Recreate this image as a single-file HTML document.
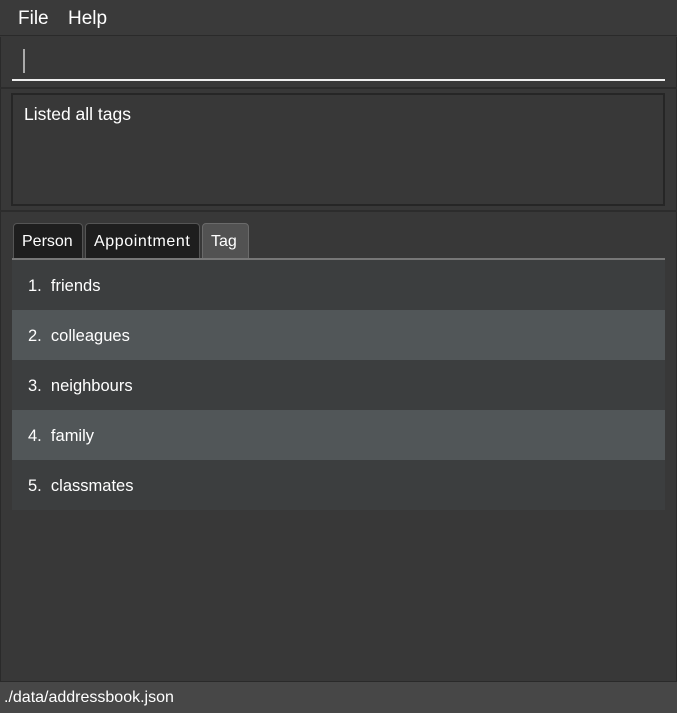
<!DOCTYPE html><html><head><style>
*{margin:0;padding:0;box-sizing:border-box}
body{width:677px;height:713px;background:#383838;font-family:"Liberation Sans",sans-serif;color:#fff;position:relative;overflow:hidden}
.a{position:absolute}
.r{font-size:16.5px;padding:17px 0 0 16px}
</style></head><body>
<div class="a" style="left:0;top:0;width:677px;height:36px;background:#3a3a3a;border-bottom:1px solid #2a2a2a"></div>
<div class="a" style="left:18px;top:8px;font-size:19px">File</div>
<div class="a" style="left:68px;top:8px;font-size:19px">Help</div>
<div class="a" style="left:0;top:37px;width:677px;height:644px;border-left:1px solid #2a2a2a;border-right:1px solid #2a2a2a"></div>
<div class="a" style="left:23px;top:49px;width:2px;height:24px;background:#aaa"></div>
<div class="a" style="left:12px;top:79px;width:653px;height:2px;background:#eee"></div>
<div class="a" style="left:0;top:87px;width:677px;height:2px;background:#2c2c2c"></div>
<div class="a" style="left:11px;top:93px;width:654px;height:113px;border:2px solid #262626;background:#383838"></div>
<div class="a" style="left:24px;top:104px;font-size:17.5px">Listed all tags</div>
<div class="a" style="left:0;top:210px;width:677px;height:2px;background:#2c2c2c"></div>
<div class="a" style="left:13px;top:223px;width:70px;height:36px;background:#1e1e1e;border:1px solid #555;border-radius:4px 4px 0 0;font-size:16px;padding:9px 0 0 8px">Person</div>
<div class="a" style="left:85px;top:223px;width:115px;height:36px;background:#1e1e1e;border:1px solid #555;border-radius:4px 4px 0 0;font-size:16px;padding:9px 0 0 8px;letter-spacing:0.6px">Appointment</div>
<div class="a" style="left:202px;top:223px;width:47px;height:36px;background:#525252;border:1px solid #6a6a6a;border-radius:4px 4px 0 0;font-size:16px;padding:9px 0 0 8px">Tag</div>
<div class="a" style="left:12px;top:258px;width:653px;height:2px;background:#777"></div>
<div class="a r" style="left:12px;top:260px;width:653px;height:50px;background:#3c3e3f">1.&nbsp; friends</div>
<div class="a r" style="left:12px;top:310px;width:653px;height:50px;background:#515658">2.&nbsp; colleagues</div>
<div class="a r" style="left:12px;top:360px;width:653px;height:50px;background:#3c3e3f">3.&nbsp; neighbours</div>
<div class="a r" style="left:12px;top:410px;width:653px;height:50px;background:#515658">4.&nbsp; family</div>
<div class="a r" style="left:12px;top:460px;width:653px;height:50px;background:#3c3e3f">5.&nbsp; classmates</div>
<div class="a" style="left:0;top:681px;width:677px;height:32px;background:#474747;border-top:1px solid #2a2a2a;font-size:16px;padding:7px 0 0 4px">./data/addressbook.json</div>
</body></html>
